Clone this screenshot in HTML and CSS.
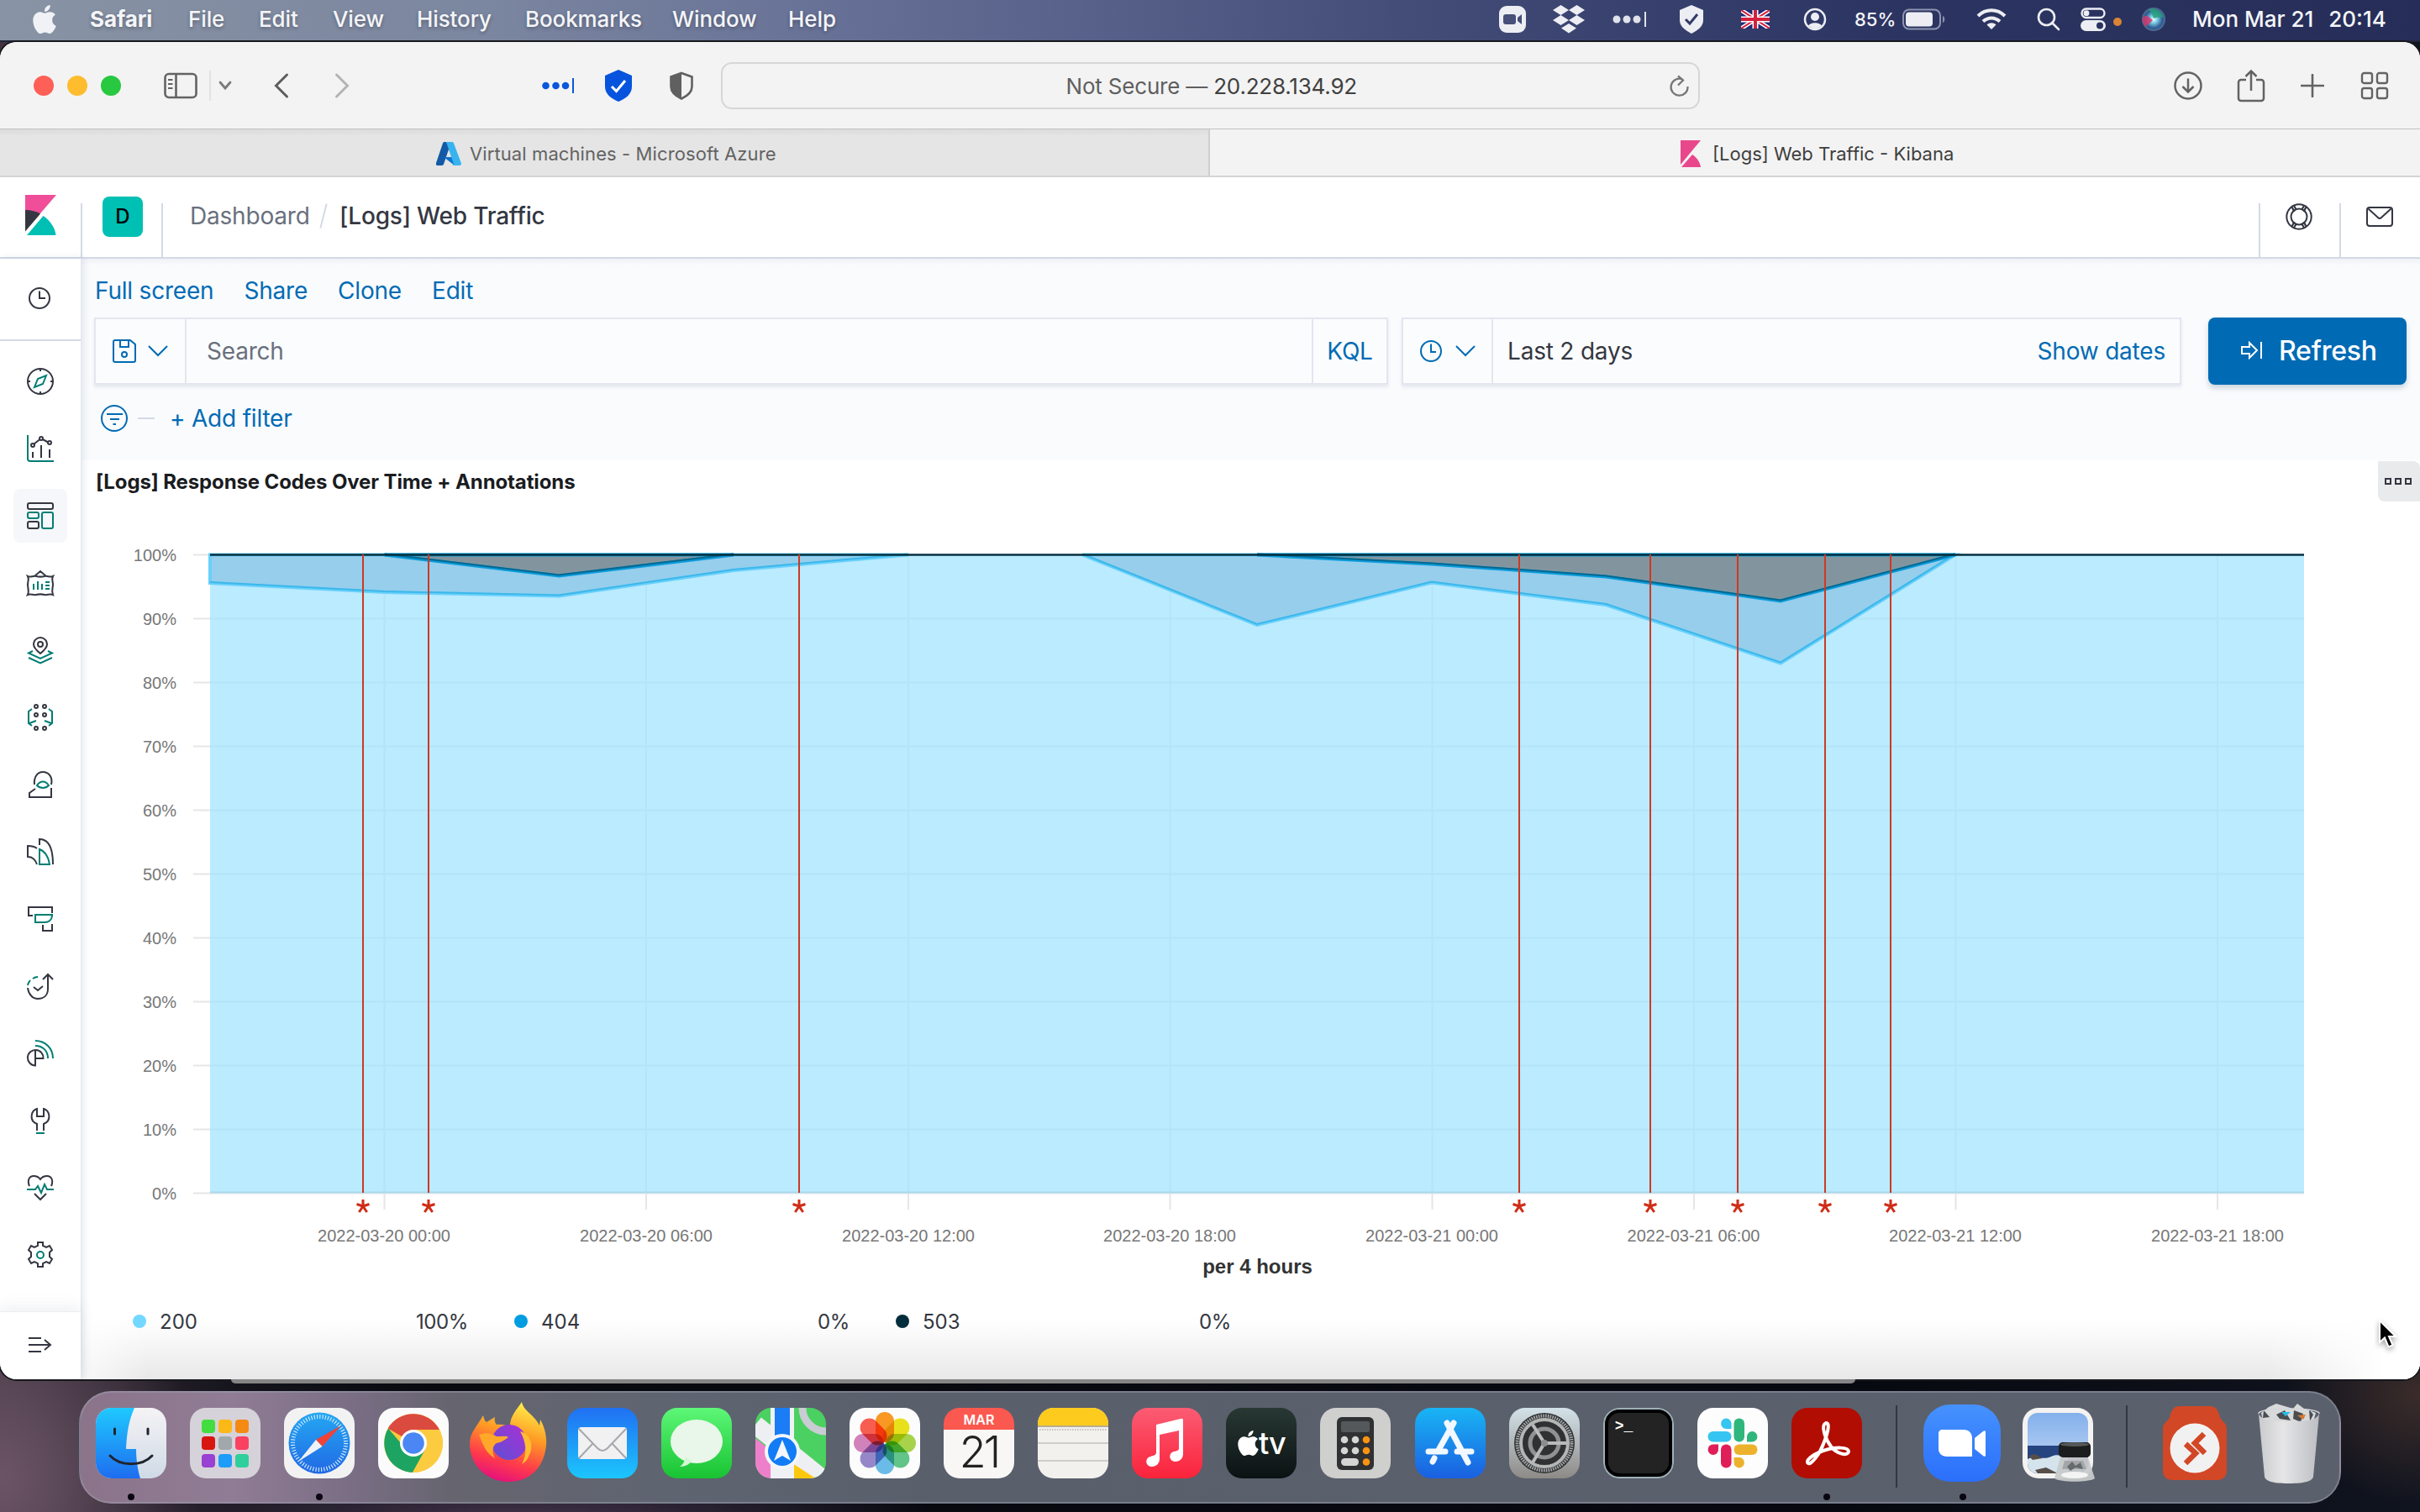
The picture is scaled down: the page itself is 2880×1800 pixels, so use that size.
FILE: index.html
```html
<!DOCTYPE html>
<html lang="en">
<head>
<meta charset="utf-8">
<title>[Logs] Web Traffic - Kibana</title>
<link rel="stylesheet" href="styles.css">
</head>
<body>
<header class="menubar">
  <nav class="menus">
    <svg class="apple" width="28" height="34" viewBox="2 0 20 24" preserveAspectRatio="none"><path fill="#f1f2f5" d="M12.152 6.896c-.948 0-2.415-1.078-3.96-1.04-2.04.027-3.91 1.183-4.961 3.014-2.117 3.675-.546 9.103 1.519 12.09 1.013 1.454 2.208 3.09 3.792 3.039 1.52-.065 2.09-.987 3.935-.987 1.831 0 2.35.987 3.96.948 1.637-.026 2.676-1.48 3.676-2.948 1.156-1.688 1.636-3.325 1.662-3.415-.039-.013-3.182-1.221-3.22-4.857-.026-3.04 2.48-4.494 2.597-4.559-1.429-2.09-3.623-2.324-4.39-2.376-2-.156-3.675 1.09-4.61 1.09zM15.53 3.83c.843-1.012 1.4-2.427 1.245-3.83-1.207.052-2.662.805-3.532 1.818-.78.896-1.454 2.338-1.273 3.714 1.338.104 2.715-.688 3.559-1.701"/></svg>
    <span class="app-name">Safari</span><span>File</span><span>Edit</span><span>View</span><span>History</span><span>Bookmarks</span><span>Window</span><span>Help</span>
  </nav>
  <div class="status">
    <svg width="34" height="34" viewBox="0 0 34 34"><rect x="1" y="1" width="32" height="32" rx="9" fill="#eceef3"/><rect x="6" y="11" width="15" height="12" rx="3" fill="#46507a"/><path d="M23 15l5-4v12l-5-4z" fill="#46507a"/></svg>
    <svg width="38" height="34" viewBox="0 0 38 34"><path fill="#eceef3" d="M9.5 0l9.500 6-9.500 6L0 6zM28.500 0L38 6l-9.500 6L19 6zM9.500 12l9.500 6-9.500 6L0 18zM28.500 12l9.500 6-9.500 6-9.500-6zM19 22l9 5.500-9 6-9-6z"/></svg>
    <svg width="41" height="20" viewBox="0 0 41 20"><g fill="#dfe2ea"><circle cx="5" cy="10" r="4.500"/><circle cx="17" cy="10" r="4.500"/><circle cx="29" cy="10" r="4.500"/><rect x="38" y="1" width="2" height="18"/></g></svg>
    <svg width="30" height="34" viewBox="0 0 30 34"><path fill="#eceef3" d="M15 0l14 6v12c0 8-7 12-14 16C8 30 1 26 1 18V6z"/><path d="M8 17l5 5 9-11" fill="none" stroke="#333c68" stroke-width="3"/></svg>
    <svg width="34" height="22" viewBox="0 0 34 22"><rect width="34" height="22" rx="1" fill="#1d2c78"/><path d="M0 0l34 22M34 0L0 22" stroke="#fff" stroke-width="5"/><path d="M0 0l34 22M34 0L0 22" stroke="#d4213d" stroke-width="2"/><path d="M17 0v22M0 11h34" stroke="#fff" stroke-width="7"/><path d="M17 0v22M0 11h34" stroke="#d4213d" stroke-width="4"/></svg>
    <svg width="28" height="28" viewBox="0 0 28 28"><circle cx="14" cy="14" r="12" fill="none" stroke="#eceef3" stroke-width="2.500"/><circle cx="14" cy="11" r="5" fill="#eceef3"/><path fill="#eceef3" d="M6 22c2-5 14-5 16 0l-8 4z"/></svg>
    <span class="percent">85%</span>
    <svg width="52" height="26" viewBox="0 0 52 26"><rect x="1" y="1.500" width="44" height="23" rx="7" fill="none" stroke="#8d94b0" stroke-width="2"/><rect x="4" y="4.500" width="32" height="17" rx="4" fill="#eceef3"/><path d="M48 9c3 1 3 7 0 8z" fill="#8d94b0"/></svg>
    <svg width="36" height="26" viewBox="0 0 36 26"><g fill="none" stroke="#eceef3" stroke-width="4"><path d="M2 9C11 0 25 0 34 9"/><path d="M8 15.500c6-5.500 14-5.500 20 0"/></g><path fill="#eceef3" d="M18 25l-5.500-5.500c3-3 8-3 11 0z"/></svg>
    <svg width="28" height="28" viewBox="0 0 28 28"><g fill="none" stroke="#eceef3" stroke-width="2.600"><circle cx="11.500" cy="11.500" r="9.500"/><path d="M18 18l8 8" stroke-linecap="round"/></g></svg>
    <svg width="30" height="28" viewBox="0 0 30 28"><rect x="1.500" y="1.500" width="27" height="10.500" rx="5.200" fill="none" stroke="#eceef3" stroke-width="2.400"/><circle cx="7" cy="6.700" r="3.400" fill="#eceef3"/><rect x="0" y="15" width="30" height="13" rx="6.500" fill="#eceef3"/><circle cx="23" cy="21.500" r="4" fill="#2b3360"/></svg>
    <i class="mic-dot"></i>
    <svg width="30" height="30" viewBox="0 0 30 30"><defs><radialGradient id="siri"><stop offset="0" stop-color="#f4ffff"/><stop offset=".3" stop-color="#7fd0e4"/><stop offset=".75" stop-color="#2d5a94"/><stop offset="1" stop-color="#55708f"/></radialGradient></defs><circle cx="15" cy="15" r="14" fill="url(#siri)"/><path d="M2 13c5-5 8 0 12 3-4 5-6 4-8 8-3-3-5-7-4-11z" fill="#d2376f" opacity=".85"/><path d="M9 3c8-3 16 3 18 10-5-1-10 0-12 1-1-4-3-7-6-11z" fill="#26a07a" opacity=".85"/></svg>
    <span class="clock"><span>Mon Mar 21</span><span>20:14</span></span>
  </div>
</header>

<main class="window">
  <div class="toolbar">
    <div class="tools-left">
      <i class="light red"></i><i class="light yellow"></i><i class="light green"></i>
      <svg width="40" height="32" viewBox="0 0 40 32"><g fill="none" stroke="#636363" stroke-width="2.600"><rect x="1.500" y="2" width="37" height="28" rx="4.500"/><path d="M14.500 2v28"/><path d="M5 9h5.500M5 14h5.500M5 19h5.500" stroke-width="2"/></g></svg>
      <i class="tool-rule"></i>
      <svg width="16" height="12" viewBox="0 0 16 12"><path d="M2 2l6 7 6-7" fill="none" stroke="#7b7b7b" stroke-width="2.800" stroke-linecap="round"/></svg>
      <svg width="18" height="32" viewBox="0 0 18 32"><path d="M15.500 3L2.500 16l13 13" fill="none" stroke="#5d5d5d" stroke-width="3" stroke-linecap="round"/></svg>
      <svg width="18" height="32" viewBox="0 0 18 32"><path d="M2.500 3l13 13-13 13" fill="none" stroke="#b4b4b4" stroke-width="3" stroke-linecap="round"/></svg>
      <svg width="40" height="20" viewBox="0 0 40 20"><g fill="#0a57dc"><circle cx="4.500" cy="10" r="4.300"/><circle cx="16.500" cy="10" r="4.300"/><circle cx="28" cy="10" r="4.300"/><rect x="36" y="1" width="2" height="18"/></g></svg>
      <svg width="32" height="38" viewBox="0 0 32 38"><path fill="#0653de" d="M16 0l16 7v13c0 9-7 14-16 18C7 34 0 29 0 20V7z"/><path d="M8 20l5.500 5.500L24 13" fill="none" stroke="#fff" stroke-width="3"/></svg>
      <svg width="30" height="34" viewBox="0 0 30 34"><path d="M15 2l12.500 4.500V18c0 7-5 11-12.500 14.500C7.500 29 2.500 25 2.500 18V6.500z" fill="none" stroke="#606060" stroke-width="2.600"/><path d="M15 2v30.500C7.500 29 2.500 25 2.500 18V6.500z" fill="#606060"/></svg>
    </div>
    <div class="address"><span class="insecure">Not Secure — <b>20.228.134.92</b></span>
      <svg width="26" height="28" viewBox="0 0 26 28"><path d="M22.500 14a10 10 0 1 1-6-8.500M11 1.500l6 5-6 6" fill="none" stroke="#777" stroke-width="2.300"/></svg>
    </div>
    <div class="tools-right">
      <svg width="36" height="36" viewBox="0 0 36 36"><g fill="none" stroke="#636363" stroke-width="2.500"><circle cx="18" cy="18" r="15.500"/><path d="M18 9.500v16M11.500 19l6.500 6.500 6.500-6.500"/></g></svg>
      <svg width="34" height="40" viewBox="0 0 34 40"><g fill="none" stroke="#636363" stroke-width="2.500"><path d="M11 13H5a3 3 0 0 0-3 3v19a3 3 0 0 0 3 3h24a3 3 0 0 0 3-3V16a3 3 0 0 0-3-3h-6M17 26V3M10.500 9L17 2.500 23.500 9"/></g></svg>
      <svg width="28" height="28" viewBox="0 0 28 28"><path d="M14 1v26M1 14h26" stroke="#636363" stroke-width="2.600" stroke-linecap="round"/></svg>
      <svg width="34" height="34" viewBox="0 0 34 34"><g fill="none" stroke="#636363" stroke-width="2.400"><rect x="2" y="2" width="12" height="12" rx="2.500"/><rect x="20" y="2" width="12" height="12" rx="2.500"/><rect x="2" y="20" width="12" height="12" rx="2.500"/><rect x="20" y="20" width="12" height="12" rx="2.500"/></g></svg>
    </div>
  </div>
  <div class="tabs">
    <div class="tab inactive">
      <svg width="30" height="28" viewBox="0 0 30 28"><path d="M9 0h9L9 26.500A2.500 2.500 0 0 1 6.500 28H2a2 2 0 0 1-2-3L8 1.500z" fill="#1459a5"/><path d="M9 18h14l3 8-4 2z" fill="#0f73cf"/><path d="M11 0h8c1 0 1.700.5 2 1.500L29.800 25c.6 2-.5 3-2 3H19c1.500 0 2-1.500 1.700-2.500L12.500 1.500C12.200.7 12 .3 11 0z" fill="#37b4ef"/></svg>
      <span>Virtual machines - Microsoft Azure</span>
    </div>
    <div class="tab active">
      <svg width="24" height="32" viewBox="0 0 24 32"><path d="M0 0h24L0 29z" fill="#e8478b"/><path d="M14 17c6 4 9 9 10 15H1z" fill="#e8478b"/></svg>
      <span>[Logs] Web Traffic - Kibana</span>
    </div>
  </div>

  <div class="kibana-header">
    <div class="logo"><svg width="37" height="48" viewBox="0 0 37 48"><path d="M0 0h37L0 43z" fill="#f04e98"/><path d="M0 18c7 0 13 1.500 18 4.500L0 43.500z" fill="#343741"/><path d="M21.500 25C30 31 35.500 39 36.500 48H2z" fill="#00bfb3"/></svg></div>
    <i class="rule"></i>
    <div class="space"><span>D</span></div>
    <i class="rule"></i>
    <div class="crumbs"><span class="crumb">Dashboard</span><i></i><span class="current">[Logs] Web Traffic</span></div>
    <i class="rule"></i>
    <div class="head-icon"><svg width="32" height="32" viewBox="0 0 32 32"><g fill="none" stroke="#343741" stroke-width="2"><circle cx="16" cy="16" r="14.700"/><circle cx="16" cy="16" r="9.500"/><path d="M10 3l3 5M7.500 4.500l3 5.500M22 3l-3 5M24.500 4.500l-3 5.500M10 29l3-5M7.500 27.500l3-5.500M22 29l-3-5M24.500 27.500l-3-5.500" stroke-width="2.200"/></g></svg></div>
    <i class="rule"></i>
    <div class="head-icon"><svg width="32" height="32" viewBox="0 0 32 32"><g fill="none" stroke="#343741" stroke-width="2"><rect x="1" y="5" width="30" height="22" rx="3"/><path d="M2.500 6.500L14 17a3 3 0 0 0 4 0L29.500 6.500"/></g></svg></div>
  </div>

  <div class="kibana-body">
    <aside class="sidebar">
      <div class="recent"><svg width="28" height="28" viewBox="0 0 28 28"><g fill="none" stroke="#343741" stroke-width="2"><circle cx="14" cy="14" r="12"/><path d="M14 5.500V14h7"/></g></svg></div>
      <nav class="apps">
        <span><svg viewBox="0 0 32 32"><g class="k"><circle cx="16" cy="16" r="15"/><path d="M16 1v3M16 28v3M1 16h3M28 16h3"/></g><path class="t" d="M23 9l-4 10-10 4 4-10z"/></svg></span>
        <span><svg viewBox="0 0 32 32"><path class="t" d="M1 0v28a3 3 0 0 0 3 3h28"/><g class="k"><path d="M7 20v7M17 12v15M27 17v10"/><circle cx="7" cy="12" r="2"/><circle cx="17" cy="4" r="2"/><circle cx="27" cy="9" r="2"/><path d="M8.500 10.500l7-5.500M18.700 5l6.500 3.500"/></g></svg></span>
        <span class="on"><svg viewBox="0 0 32 32"><g class="k"><rect x="1" y="1" width="30" height="7" rx="2"/><rect x="1" y="23" width="13" height="8" rx="2"/></g><g class="t"><rect x="1" y="12" width="13" height="7" rx="2"/><rect x="18" y="12" width="13" height="19" rx="2"/></g></svg></span>
        <span><svg viewBox="0 0 32 32"><path class="k" d="M9 8l7-6 7 6M1 8c4 2 6-1 10 0s6 1 10 0 6 2 10 0c-2 4 0 6 0 10s-2 6 0 12c-4-2-6 1-10 0s-6-1-10 0-6-2-10 0c2-4 0-8 0-12s2-6 0-10z"/><path class="t" d="M8 17v7M13 14v10M18 17v7M22 15h5M22 19h5M22 23h5"/></svg></span>
        <span><svg viewBox="0 0 32 32"><g class="k"><path d="M16 20c-5-4-8-7-8-11a8 8 0 0 1 16 0c0 4-3 7-8 11z"/><circle cx="16" cy="9" r="3"/></g><path class="t" d="M7 17l-5 2.500L16 26l14-6.500-5-2.500M2 25l14 6.500L30 25"/></svg></span>
        <span><svg viewBox="0 0 32 32"><g class="k"><circle cx="11" cy="3" r="2"/><circle cx="21" cy="3" r="2"/><circle cx="11" cy="13" r="2"/><circle cx="21" cy="13" r="2"/><circle cx="11" cy="29" r="2"/><circle cx="21" cy="29" r="2"/></g><path class="t" d="M6 6L2 9v14l4 3M26 6l4 3v14l-4 3M3 23l8-3M29 23l-8-3"/></svg></span>
        <span><svg viewBox="0 0 32 32"><path class="k" d="M9 16c-1-8 3-15 10-15s12 6 10 15M10 21l-7 5v5h26V20"/><path class="t" d="M12 17c4-6 10-6 14 0-4 4-10 4-14 0z"/></svg></span>
        <span><svg viewBox="0 0 32 32"><path class="k" d="M12 12C8 9 5 9 1 9v13c5 0 9 3 11 9M15 8V1c9 0 16 8 16 30"/><path class="t" d="M15 13c6 2 11 9 12 18H15z"/></svg></span>
        <span><svg viewBox="0 0 32 32"><path class="k" d="M7 12H2V2h28v7M19 23v7h11v-8"/><path class="t" d="M10 11h20c0 6-4 9-9 9H10z"/></svg></span>
        <span><svg viewBox="0 0 32 32"><path class="k" d="M1 18c1 8 6 13 12 13 8 0 12-5 12-12V2M19 8l6-6 6 6M8 17l5 4 6-5"/><path class="t" d="M1 15c.5-3 1.500-4 3-6M7 7c2-1.500 4-2 6-2"/></svg></span>
        <span><svg viewBox="0 0 32 32"><path class="k" d="M10 12v18.500A9.300 9.300 0 1 1 19.500 22H10"/><path class="t" d="M10 1c12 0 21 9 21 21M10 7c9 0 15 6 15 15"/></svg></span>
        <span><svg viewBox="0 0 32 32"><path class="k" d="M12 28v-8C2 16 5 4 12 2v9h8V2c7 2 10 14 0 18v8"/><path class="t" d="M11 31h10"/></svg></span>
        <span><svg viewBox="0 0 32 32"><path class="k" d="M3 14C0 7 3 2 8 2c4 0 6 1 8 4 2-3 4-4 8-4 5 0 8 5 5 12M9 23l7 7 7-7"/><path class="t" d="M0 18h10l3-4 4 8 4-10 3 6h8"/></svg></span>
        <span><svg viewBox="0 0 32 32"><path class="k" d="M13 1h6v4l4 2 4-2 3 5-3 3v5l3 3-3 5-4-2-4 2v4h-6v-4l-4-2-4 2-3-5 3-3v-5l-3-3 3-5 4 2 4-2z"/><circle class="t" cx="16" cy="16" r="4"/></svg></span>
      </nav>
      <div class="expand"><svg width="30" height="20" viewBox="0 0 30 20"><path d="M1 2h15M1 10h26M1 18h15M20 4l7 6-7 6" fill="none" stroke="#343741" stroke-width="2"/></svg></div>
    </aside>

    <section class="content">
      <div class="query-area">
        <nav class="actions"><a>Full screen</a><a>Share</a><a>Clone</a><a>Edit</a></nav>
        <div class="query-row">
          <div class="search-box">
            <div class="seg save"><svg width="28" height="28" viewBox="0 0 28 28"><g class="b"><path d="M3 1h18l6 5v19a2 2 0 0 1-2 2H3a2 2 0 0 1-2-2V3a2 2 0 0 1 2-2z"/><path d="M9 1v8h10V1"/><circle cx="14" cy="18" r="3"/></g></svg><svg width="26" height="14" viewBox="0 0 26 14"><path class="b" d="M2 1l11 11L24 1"/></svg></div>
            <span class="placeholder">Search</span>
            <span class="kql">KQL</span>
          </div>
          <div class="time-box">
            <div class="seg when"><svg width="28" height="28" viewBox="0 0 28 28"><g class="b"><circle cx="14" cy="14" r="12"/><path d="M14 5.500V15h6"/></g></svg><svg width="26" height="14" viewBox="0 0 26 14"><path class="b" d="M2 1l11 11L24 1"/></svg></div>
            <span class="range">Last 2 days</span>
            <span class="show-dates">Show dates</span>
          </div>
          <div class="refresh"><svg width="26" height="22" viewBox="0 0 26 22"><path d="M1 7h9V2l9 9-9 9v-5H1zM24 1v20" fill="none" stroke="#fff" stroke-width="2"/></svg><span>Refresh</span></div>
        </div>
        <div class="filters"><svg width="32" height="32" viewBox="0 0 32 32"><g class="b"><circle cx="16" cy="16" r="15"/><path d="M7 11h19M11 17h11M14.500 23h3.500"/></g></svg><i></i><span>+ Add filter</span></div>
      </div>

      <div class="panel">
        <div class="panel-head"><h2>[Logs] Response Codes Over Time + Annotations</h2><div class="options"><i></i><i></i><i></i></div></div>
        <svg class="chart" width="2784" height="940" viewBox="96 598 2784 940">
          <g stroke="#e6e6e6" stroke-width="2">
            <path d="M230 660.500h20M230 736.500h20M230 812.500h20M230 888.500h20M230 964.500h20M230 1040.500h20M230 1116.500h20M230 1192.500h20M230 1268.500h20M230 1344.500h20M230 1420.500h2512"/>
            <path d="M457.500 1420v20M769 1420v20M1081 1420v20M1392.500 1420v20M1704.500 1420v20M2016 1420v20M2327.500 1420v20M2639 1420v20"/>
          </g>
          <path fill="#baebff" d="M250 660H2742V1420H250z"/>
          <path fill="none" stroke="#b3e4f8" stroke-width="2" d="M250 736.500h2492M250 812.500h2492M250 888.500h2492M250 964.500h2492M250 1040.500h2492M250 1116.500h2492M250 1192.500h2492M250 1268.500h2492M250 1344.500h2492M457.500 660v760M769 660v760M1081 660v760M1392.500 660v760M1704.500 660v760M2016 660v760M2327.500 660v760M2639 660v760"/>
          <path stroke="#a9d9ee" stroke-width="2" d="M250 1419.500h2492"/>
          <g fill="none" stroke-width="4">
            <path fill="#96ceec" stroke="#68d0fb" d="M250 694L457.700 705 665.300 709.500 873 679 1080.700 660.500H250zM1288.300 660.500L1496 744 1703.700 693.500 1911.300 720 2119 789.500 2326.700 660.500z"/>
            <path stroke="#3db7ea" stroke-width="2" d="M250 693L457.700 704 665.300 708.500 873 678 1080.700 659.500M1288.300 659.500L1496 743 1703.700 692.500 1911.300 719 2119 788.500 2326.700 659.500"/>
            <path fill="#82959f" stroke="#0a9bdb" d="M457.700 660.500L665.300 685.500 873 660.500zM1496 660.500L1703.700 671.500 1911.300 686.500 2119 715.500 2326.700 660.500z"/>
            <path stroke="#05688f" stroke-width="2" d="M457.700 659.500L665.300 684.500 873 659.500M1496 659.500L1703.700 670.500 1911.300 685.500 2119 714.500 2326.700 659.500"/>
            <path stroke="#06303f" stroke-width="2.400" d="M250 660.500H2742"/>
          </g>
          <path fill="none" stroke="#cc3a24" stroke-width="2" d="M432 660v760M510 660v760M951 660v760M1808 660v760M1964 660v760M2068 660v760M2172 660v760M2250 660v760"/>
          <defs><path id="star" d="M0 0v-8M0 0l-7.500-2.500M0 0l7.500-2.500M0 0l-4.700 7M0 0l4.700 7" stroke="#cf2c16" stroke-width="3"/></defs>
          <use href="#star" x="432" y="1436"/><use href="#star" x="510" y="1436"/><use href="#star" x="951" y="1436"/><use href="#star" x="1808" y="1436"/><use href="#star" x="1964" y="1436"/><use href="#star" x="2068" y="1436"/><use href="#star" x="2172" y="1436"/><use href="#star" x="2250" y="1436"/>
          <g class="y-labels"><text x="210" y="668">100%</text><text x="210" y="744">90%</text><text x="210" y="820">80%</text><text x="210" y="896">70%</text><text x="210" y="972">60%</text><text x="210" y="1048">50%</text><text x="210" y="1124">40%</text><text x="210" y="1200">30%</text><text x="210" y="1276">20%</text><text x="210" y="1352">10%</text><text x="210" y="1428">0%</text></g>
          <g class="x-labels"><text x="457" y="1478">2022-03-20 00:00</text><text x="769" y="1478">2022-03-20 06:00</text><text x="1081" y="1478">2022-03-20 12:00</text><text x="1392" y="1478">2022-03-20 18:00</text><text x="1704" y="1478">2022-03-21 00:00</text><text x="2015.500" y="1478">2022-03-21 06:00</text><text x="2327" y="1478">2022-03-21 12:00</text><text x="2639" y="1478">2022-03-21 18:00</text></g>
          <text class="axis-title" x="1496.500" y="1516">per 4 hours</text>
        </svg>
        <div class="legend">
          <div class="entry"><i class="c200"></i><span>200</span><b>100%</b></div>
          <div class="entry"><i class="c404"></i><span>404</span><b>0%</b></div>
          <div class="entry"><i class="c503"></i><span>503</span><b>0%</b></div>
        </div>
      </div>
    </section>
  </div>
</main>
<svg class="cursor" width="24" height="38" viewBox="0 0 24 38"><path d="M2 2v26l6-5.500 4.500 11 5-2.200L13 21h8z" fill="#000" stroke="#fff" stroke-width="2"/></svg>

<div class="desk">
<div class="behind"></div>
<footer class="dock">
  <svg class="app" viewBox="0 0 84 84"><defs><linearGradient id="g1" x1="0" y1="0" x2="0" y2="1"><stop offset="0" stop-color="#1fc9ff"/><stop offset="1" stop-color="#1e6df0"/></linearGradient><linearGradient id="g2" x1="0" y1="0" x2="0" y2="1"><stop offset="0" stop-color="#f5f3f5"/><stop offset="1" stop-color="#cfdae6"/></linearGradient></defs><rect width="84" height="84" rx="19" fill="url(#g2)"/><path fill="url(#g1)" d="M19 0h27c-7 16-9 30-10 49h12c0 13 2 25 5 35H19A19 19 0 0 1 0 65V19A19 19 0 0 1 19 0z"/><path d="M22.500 25v6M62 25v6M17 57c12 13 38 13 50 0" fill="none" stroke="#20242c" stroke-width="3" stroke-linecap="round"/></svg>
  <svg class="app" viewBox="0 0 84 84"><rect width="84" height="84" rx="19" fill="#d6d2da"/><rect x="14" y="14" width="16" height="16" rx="4" fill="#44dd40"/><rect x="34" y="14" width="16" height="16" rx="4" fill="#fcb816"/><rect x="54" y="14" width="16" height="16" rx="4" fill="#f58a12"/><rect x="14" y="34" width="16" height="16" rx="4" fill="#d9150f"/><rect x="34" y="34" width="16" height="16" rx="4" fill="#a0a8ab"/><rect x="54" y="34" width="16" height="16" rx="4" fill="#fb4160"/><rect x="14" y="55" width="16" height="16" rx="4" fill="#9941d2"/><rect x="34" y="55" width="16" height="16" rx="4" fill="#1d9cfa"/><rect x="54" y="55" width="16" height="16" rx="4" fill="#2fcf9b"/></svg>
  <svg class="app" viewBox="0 0 84 84"><defs><linearGradient id="g3" x1="0" y1="0" x2="0" y2="1"><stop offset="0" stop-color="#24a7f2"/><stop offset="1" stop-color="#2169e4"/></linearGradient></defs><rect width="84" height="84" rx="19" fill="#f2f2f3"/><circle cx="42" cy="42" r="36.500" fill="url(#g3)"/><circle cx="42" cy="42" r="31.500" fill="none" stroke="#d9efff" stroke-width="5" stroke-dasharray="1.100 2.200"/><path d="M68 21L45.500 46 38 38z" fill="#f04237"/><path d="M17 64l21-26 7.500 8z" fill="#f0f2f6"/></svg>
  <svg class="app" viewBox="0 0 84 84"><rect width="84" height="84" rx="19" fill="#fbfbfb"/><circle cx="42" cy="42" r="35" fill="#fbc93c"/><path d="M42 42L11.700 24.500A35 35 0 0 1 73 26H42z" fill="#db4a3e"/><path d="M12 24.500A35 35 0 0 0 41 77L56 50 42 42H27z" fill="#1da462"/><path d="M42 26h31A35 35 0 0 1 41 77l15-27z" fill="#fdcb40"/><circle cx="42" cy="42" r="16" fill="#fff"/><circle cx="42" cy="42" r="12.800" fill="#4a87f4"/></svg>
  <svg class="app" viewBox="0 0 84 84"><defs><linearGradient id="g4" x1="0.700" y1="0" x2=".4" y2="1"><stop offset="0" stop-color="#fff04a"/><stop offset=".4" stop-color="#ff9a24"/><stop offset=".75" stop-color="#ff3a4b"/><stop offset="1" stop-color="#e4127c"/></linearGradient><linearGradient id="g5" x1="0" y1="1" x2="1" y2="0"><stop offset="0" stop-color="#5a50d2"/><stop offset="1" stop-color="#ad2fd6"/></linearGradient></defs><path fill="url(#g4)" d="M59-7c2 11 15 15 21 28l1-7c6 10 8 23 7 31C85 73 67 88 43 88 18 88-3 69-3 43-3 29 6 22 13 9c1 4 2 7 4 8l10-6c-1 4 0 7 2 9 7-1 12 1 16 3C44 10 54 1 59-7z"/><circle cx="44" cy="41" r="21" fill="url(#g5)"/><path fill="#ffa82a" d="M8 32c8-3 15-2 21 2 7 0 12-1 14 1-4 3-8 6-14 7-5 3-6 10-2 18C16 54 12 42 8 32z"/><path fill="#ffbd31" d="M57 28c13 3 17 18 10 30-2 5-5 7-8 9 7-12 5-27-2-39z"/></svg>
  <svg class="app" viewBox="0 0 84 84"><defs><linearGradient id="g6" x1="0" y1="0" x2="0" y2="1"><stop offset="0" stop-color="#2070f2"/><stop offset="1" stop-color="#1cc6fd"/></linearGradient></defs><rect width="84" height="84" rx="19" fill="url(#g6)"/><rect x="13" y="23" width="58" height="38" rx="4" fill="#f1f1f1"/><path d="M14 25l22 23c4 4 8 4 12 0l22-23M14 60l16-17M70 60L54 43" fill="none" stroke="#a5a8ad" stroke-width="2"/></svg>
  <svg class="app" viewBox="0 0 84 84"><defs><linearGradient id="g7" x1="0" y1="0" x2="0" y2="1"><stop offset="0" stop-color="#5df777"/><stop offset="1" stop-color="#18c332"/></linearGradient></defs><rect width="84" height="84" rx="19" fill="url(#g7)"/><ellipse cx="42" cy="40" rx="31" ry="26" fill="#e9f6ea"/><path d="M28 58c0 6-2 9-6 12 7 0 12-3 14-7z" fill="#d5f6d6"/></svg>
  <svg class="app" viewBox="0 0 84 84"><defs><clipPath id="m"><rect width="84" height="84" rx="19"/></clipPath></defs><g clip-path="url(#m)"><path fill="#4bd161" d="M0 0h84v84H0z"/><path d="M0 20l84 68" stroke="#eeeff3" stroke-width="22"/><path d="M0 36l22 18v30H0z" fill="#ee80cb"/><path d="M44 66l34 22H44z" fill="#fcc80d"/><circle cx="84" cy="0" r="28" fill="none" stroke="#c9ccd3" stroke-width="9"/><path fill="#f0f1f5" d="M18 0h28v84H18z"/><path fill="#1a7df5" d="M23 0h18v40H23z"/><circle cx="32" cy="52" r="21" fill="#f3f5f8"/><circle cx="32" cy="52" r="17" fill="#117cf6"/><path d="M32 38l10 25-10-6-10 6z" fill="#f3f6fa"/></g></svg>
  <svg class="app photos" viewBox="0 0 84 84"><rect width="84" height="84" rx="19" fill="#fcfcfc"/><rect class="petal" x="31" y="5" width="22" height="36" rx="11" fill="#fc9a23"/><rect class="petal" x="31" y="5" width="22" height="36" rx="11" fill="#ece31c" transform="rotate(45 42 42)"/><rect class="petal" x="31" y="5" width="22" height="36" rx="11" fill="#a9d64c" transform="rotate(90 42 42)"/><rect class="petal" x="31" y="5" width="22" height="36" rx="11" fill="#62c78a" transform="rotate(135 42 42)"/><rect class="petal" x="31" y="5" width="22" height="36" rx="11" fill="#6bbdea" transform="rotate(180 42 42)"/><rect class="petal" x="31" y="5" width="22" height="36" rx="11" fill="#988acb" transform="rotate(225 42 42)"/><rect class="petal" x="31" y="5" width="22" height="36" rx="11" fill="#d484bc" transform="rotate(270 42 42)"/><rect class="petal" x="31" y="5" width="22" height="36" rx="11" fill="#fb5f50" transform="rotate(315 42 42)"/></svg>
  <div class="app calendar"><span>MAR</span><b>21</b></div>
  <svg class="app" viewBox="0 0 84 84"><defs><clipPath id="n"><rect width="84" height="84" rx="19"/></clipPath></defs><g clip-path="url(#n)"><path fill="#f3f1ed" d="M0 0h84v84H0z"/><path fill="#fccb1d" d="M0 0h84v21H0z"/><path d="M0 22h84" stroke="#b8ad93" stroke-width="2"/><path d="M2 26h80" stroke="#b5b3b0" stroke-width="1.500" stroke-dasharray="1.500 1.500"/><path d="M0 42h84M0 63h84" stroke="#cfcdca" stroke-width="2"/></g></svg>
  <svg class="app" viewBox="0 0 84 84"><defs><linearGradient id="g8" x1="0" y1="0" x2="0" y2="1"><stop offset="0" stop-color="#fb5c74"/><stop offset="1" stop-color="#fa233b"/></linearGradient></defs><rect width="84" height="84" rx="19" fill="url(#g8)"/><path fill="#fff" d="M29 20l29-7c2-.5 3 0 3 2v40c0 5-4 9-9 9-8 0-9-10-2-12 4-1 6-1 6-4V27l-23 5v29c0 5-4 9-9 9-8 0-9-10-2-12 4-1 7-2 7-5z"/></svg>
  <div class="app tv"><svg width="25" height="30" viewBox="2 0 20 24"><path fill="#fff" d="M12.152 6.896c-.948 0-2.415-1.078-3.960-1.040-2.040.027-3.910 1.183-4.961 3.014-2.117 3.675-.546 9.103 1.519 12.090 1.013 1.454 2.208 3.090 3.792 3.039 1.520-.065 2.090-.987 3.935-.987 1.831 0 2.350.987 3.960.948 1.637-.026 2.676-1.480 3.676-2.948 1.156-1.688 1.636-3.325 1.662-3.415-.039-.013-3.182-1.221-3.220-4.857-.026-3.040 2.480-4.494 2.597-4.559-1.429-2.090-3.623-2.324-4.390-2.376-2-.156-3.675 1.090-4.610 1.090zM15.530 3.830c.843-1.012 1.400-2.427 1.245-3.830-1.207.052-2.662.805-3.532 1.818-.780.896-1.454 2.338-1.273 3.714 1.338.104 2.715-.688 3.559-1.701"/></svg><span>tv</span></div>
  <svg class="app" viewBox="0 0 84 84"><rect width="84" height="84" rx="19" fill="#cfcfcd"/><rect x="20" y="11" width="44" height="63" rx="6" fill="#2f3133"/><rect x="25" y="16" width="34" height="13" rx="2" fill="#55585a"/><g fill="#d5d5d3"><circle cx="29" cy="38" r="4.300"/><circle cx="42" cy="38" r="4.300"/><circle cx="29" cy="51" r="4.300"/><circle cx="42" cy="51" r="4.300"/><rect x="25" y="60" width="21" height="9" rx="4.500"/></g><g fill="#fb9312"><circle cx="55" cy="38" r="4.300"/><circle cx="55" cy="51" r="4.300"/><circle cx="55" cy="64.500" r="4.300"/></g></svg>
  <svg class="app" viewBox="0 0 84 84"><defs><linearGradient id="g9" x1="0" y1="0" x2="0" y2="1"><stop offset="0" stop-color="#19b5f5"/><stop offset="1" stop-color="#1a5fe0"/></linearGradient></defs><rect width="84" height="84" rx="19" fill="url(#g9)"/><path d="M46 18L27 52M38 18l25 47M16 52h20M50 52h17M23 60l-2 4" stroke="#f2f8ff" stroke-width="7" stroke-linecap="round"/></svg>
  <svg class="app" viewBox="0 0 84 84"><defs><linearGradient id="g10" x1="0" y1="0" x2="0" y2="1"><stop offset="0" stop-color="#d3e2e9"/><stop offset="1" stop-color="#8d8a87"/></linearGradient></defs><rect width="84" height="84" rx="19" fill="url(#g10)"/><circle cx="42" cy="42" r="36" fill="#2f3132"/><circle cx="42" cy="42" r="32.500" fill="none" stroke="#a7abad" stroke-width="4" stroke-dasharray="1.600 1.200"/><circle cx="42" cy="42" r="28" fill="none" stroke="#b4b6b6" stroke-width="4"/><circle cx="42" cy="42" r="17" fill="none" stroke="#8f9293" stroke-width="5"/><path d="M42 42h26M42 42L28 20M42 42L28 65" stroke="#b9bbbb" stroke-width="4"/><circle cx="42" cy="42" r="4" fill="#8b8d8d"/></svg>
  <div class="app terminal"><span>&gt;_</span></div>
  <svg class="app" viewBox="0 0 84 84"><rect width="84" height="84" rx="19" fill="#fdfdfd"/><rect x="12.500" y="28" width="28" height="12.500" rx="6.200" fill="#36c5f0"/><path d="M40.500 25H34a6.200 6.200 0 1 1 6.500-6.200z" fill="#36c5f0"/><rect x="43.500" y="12.500" width="12.500" height="28" rx="6.200" fill="#2eb67d"/><path d="M59 40.500V34a6.200 6.200 0 1 1 6.200 6.500z" fill="#2eb67d"/><rect x="43.500" y="43.500" width="28" height="12.500" rx="6.200" fill="#ecb22e"/><path d="M43.500 59H50a6.200 6.200 0 1 1-6.500 6.200z" fill="#ecb22e"/><rect x="28" y="43.500" width="12.500" height="28" rx="6.200" fill="#e01e5a"/><path d="M25 43.500V50a6.200 6.200 0 1 1-6.200-6.500z" fill="#e01e5a"/></svg>
  <svg class="app" viewBox="0 0 84 84"><rect width="84" height="84" rx="19" fill="#b20d02"/><path d="M41 18c-7 3 0 20 6 28 7 9 20 12 21 6 0-6-17-5-27-2-13 4-23 11-22 15 3 6 15-11 19-22 4-10 9-25 3-25z" fill="none" stroke="#fff" stroke-width="4"/></svg>
  <i class="dock-rule first"></i>
  <svg class="app big" viewBox="0 0 92 92"><defs><linearGradient id="g11" x1="0" y1="0" x2="0" y2="1"><stop offset="0" stop-color="#4592fe"/><stop offset="1" stop-color="#2b6ffb"/></linearGradient></defs><rect width="92" height="92" rx="32" fill="url(#g11)"/><path fill="#fff" d="M22 30h26c6 0 10 4 10 10v22H28c-6 0-10-4-10-9V34c0-2 2-4 4-4zM61 40l10-8c2-1.500 3-1 3 1v27c0 2-1 2.500-3 1l-10-8z"/></svg>
  <svg class="app preview" viewBox="0 0 88 88"><defs><linearGradient id="g12" x1="0" y1="0" x2="0" y2="1"><stop offset="0" stop-color="#83b0ec"/><stop offset="1" stop-color="#c5d9f4"/></linearGradient></defs><rect width="84" height="84" rx="19" fill="#f4f3f2"/><rect x="6" y="6" width="72" height="72" rx="12" fill="url(#g12)"/><path d="M6 45h72v21a12 12 0 0 1-12 12H18A12 12 0 0 1 6 66z" fill="#254480"/><path d="M6 61c10-6 19 2 28-3s14 2 20 0v20H18A12 12 0 0 1 6 66z" fill="#d5e4ec"/><path d="M7 57l8-2 9 5-12 2zM15 74l13-3 14 7H18z" fill="#574d49"/><path d="M45 59h33l8 25c-7 5-41 5-48 0z" fill="#c8cacb" opacity=".95"/><path d="M50 63h22l4 10H47z" fill="#a3a6a9"/><path d="M53 70l6-6 4 5 6-4 3 8-9-2-6 4z" fill="#66696d"/><ellipse cx="62" cy="80" rx="16" ry="4" fill="#f4f4f4"/><rect x="43" y="41" width="38" height="18" rx="5" fill="#1c1d1e"/><ellipse cx="62" cy="43.500" rx="17" ry="2.500" fill="#55585a"/></svg>
  <i class="dock-rule second"></i>
  <svg class="app rdp" viewBox="0 0 76 88"><path d="M20 0h36c8 0 10 6 12 13 2 6 8 6 8 14v50c0 7-5 11-11 11H11C5 88 0 84 0 77V27c0-8 6-8 8-14C10 6 12 0 20 0z" fill="#d24726"/><circle cx="38" cy="50" r="29.500" fill="#f2f1f1"/><path d="M49 33L38 44l12 12M27 45l12 11-12 12" fill="none" stroke="#d24726" stroke-width="6.500"/></svg>
  <svg class="app trash" viewBox="0 0 76 98"><defs><linearGradient id="g13"><stop offset="0" stop-color="#c9cacc"/><stop offset=".4" stop-color="#e6e6e7"/><stop offset="1" stop-color="#bcbec2"/></linearGradient></defs><path d="M5 13l9-7 9-4 10 3 10 3 5-6 8 6 14 5-4 14H8z" fill="#d8d9da"/><path d="M8 10l7 8-8 1zM23 15l10-5 7 12-13-2zM44 10l11 4-3 10-9-4zM62 9l5 6-4 8z" fill="#4a4c50"/><path d="M29 12h11l-6 5z" fill="#25bde7"/><path d="M48 16l10-1-3 6z" fill="#d57734"/><path d="M2 14c4 8 12 9 36 9s32-1 36-9l-7 75c-1 5-9 8-29 8s-28-3-29-8z" fill="url(#g13)"/><path d="M2 14c-2-8 74-8 72 0" fill="none" stroke="#d4d6d9" stroke-width="1.500"/></svg>
</footer>
<div class="lamps"><i></i><i></i><i></i><i></i></div>
</div>
</body>
</html>
```
FILE: styles.css
```css
* { box-sizing: border-box; }
body {
  margin: 0; width: 2880px; height: 1800px; overflow: hidden; position: relative;
  display: flex; flex-direction: column;
  font-family: Inter, "Liberation Sans", sans-serif;
  background:
    radial-gradient(ellipse 240px 260px at 0 1760px, #6b5466, transparent),
    radial-gradient(ellipse 500px 90px at 620px 1815px, #46364e, transparent),
    radial-gradient(ellipse 160px 130px at 2880px 1660px, #3b2c2a, transparent),
    linear-gradient(90deg, #413440 0, #15141c 280px, #080a10 500px, #070910 2200px, #10141f 100%);
}
svg { display: block; flex: none; }
i { display: block; flex: none; }
span { white-space: nowrap; }

/* macOS menu bar */
.menubar {
  height: 50px; flex: none; padding-bottom: 3px; display: flex; justify-content: space-between; align-items: center;
  background: linear-gradient(90deg, #8893a4 0, #7b86a0 20%, #667096 35%, #434d78 58%, #2c3562 78%, #262d58 100%);
  border-bottom: 2px solid #23263a; color: #f4f5f8; font-size: 26px; font-weight: 500;
}
.menus { display: grid; grid-template-columns: 68px 117px 84px 88px 100px 129px 175px 138px 60px; padding-left: 39px; align-items: center; text-shadow: 0 2px 4px rgba(0,0,0,.3); letter-spacing: -.1px; }
.app-name { font-weight: 700; }
.status { display: grid; grid-template-columns: 65px 71px 79px 74px 74px 61px 57px 88px 72px 52px 39px 33px 61px 271px; align-items: center; }
.percent { font-size: 22px; }
.mic-dot { width: 10px; height: 10px; border-radius: 5px; background: #d98534; margin-top: 6px; }
.clock { display: flex; gap: 18px; }

/* browser window */
.window { height: 1592px; flex: none; display: flex; flex-direction: column; border-radius: 20px; overflow: hidden; background: #fff; box-shadow: 0 0 0 2px #17181d; }
.toolbar { height: 104px; flex: none; background: #f3f3f3; display: flex; align-items: center; border-bottom: 1px solid #c2c2c2; }
.tools-left { width: 858px; display: grid; grid-template-columns: 40px 40px 75px 54px 11px 66px 72px 247px 75px 76px 30px; padding-left: 40px; align-items: center; }
.light { width: 24px; height: 24px; border-radius: 12px; }
.red { background: #fe5f57; } .yellow { background: #febc2e; } .green { background: #28c840; }
.tool-rule { width: 2px; height: 36px; background: #e2e2e2; }
.address { width: 1165px; height: 56px; border: 2px solid #d6d6d6; border-radius: 13px; display: flex; align-items: center; justify-content: flex-end; gap: 371px; padding: 2px 9px 0 0; font-size: 26px; letter-spacing: -.2px; color: #5f5f5f; }
.address b { font-weight: 400; color: #404040; }
.tools-right { margin-left: 563px; display: grid; grid-template-columns: 76px 76px 71px 34px; align-items: center; }
.tabs { height: 57px; flex: none; display: flex; border-bottom: 2px solid #d4d4d4; font-size: 22px; }
.tab { width: 1440px; display: flex; align-items: center; padding-top: 2px; background: #f3f3f3; color: #3e3e3e; }
.inactive { background: linear-gradient(#dcdcdc 0, #e5e5e5 8px); border-right: 2px solid #cfcfcf; color: #636363; padding-left: 519px; gap: 10px; letter-spacing: .1px; }
.active { padding-left: 560px; gap: 14px; }

/* Kibana chrome */
.kibana-header { height: 97px; flex: none; display: flex; align-items: center; padding-bottom: 2px; border-bottom: 2px solid #d3dae6; background: #fff; }
.logo { width: 96px; padding: 0 0 4px 30px; }
.kibana-header .rule { width: 2px; height: 64px; background: #d3dae6; align-self: flex-end; margin-bottom: -2px; }
.space { width: 94px; padding-left: 24px; }
.space span { display: flex; width: 48px; height: 48px; border-radius: 8px; background: #00bfb3; align-items: center; justify-content: center; font-size: 24px; font-weight: 500; color: #000; }
.crumbs { flex: 1; display: flex; align-items: center; padding: 0 0 1px 32px; font-size: 28px; letter-spacing: -.2px; }
.crumb { color: #69707d; width: 158px; }
.crumbs i { width: 2px; height: 30px; background: #d3dae6; transform: rotate(14deg); margin-right: 18px; }
.current { color: #343741; font-weight: 500; }
.head-icon { width: 94px; padding-right: 2px; display: flex; justify-content: center; }
.kibana-body { flex: 1; display: flex; min-height: 0; }
.sidebar { width: 97px; flex: none; display: flex; flex-direction: column; border-right: 1px solid #e3e7ee; box-shadow: 2px 0 8px rgba(60,80,110,.14); background: #fff; z-index: 1; }
.recent { height: 98px; padding: 0 0 3px 33px; display: flex; align-items: center; border-bottom: 2px solid #d3dae6; }
.apps { flex: 1; min-height: 0; display: flex; flex-direction: column; gap: 16px; padding: 16px 0 0 16px; }
.apps span { width: 64px; height: 64px; flex: none; border-radius: 8px; padding: 16px; }
.apps .on { background: #f5f7fa; }
.apps svg { width: 32px; height: 32px; overflow: visible; }
.k { fill: none; stroke: #343741; stroke-width: 2; }
.t { fill: none; stroke: #017d73; stroke-width: 2; }
.b { fill: none; stroke: #006bb4; stroke-width: 2; }
.expand { height: 81px; flex: none; padding: 0 0 3px 33px; display: flex; align-items: center; border-top: 1px solid #eceef2; box-shadow: 0 -6px 16px rgba(60,80,110,.08); }

/* query bar */
.content { flex: 1; display: flex; flex-direction: column; }
.query-area { height: 240px; flex: none; background: linear-gradient(#eff1f6 0, #fafbfd 8px); font-size: 28px; letter-spacing: -.2px; color: #006bb4; padding: 0 16px 0 15px; }
.actions { height: 70px; padding: 6px 0 0 1px; display: flex; gap: 36px; align-items: center; }
.query-row { display: flex; height: 80px; }
.search-box, .time-box { display: flex; align-items: center; background: #fbfcfd; border: 2px solid #e3e6ef; box-shadow: 0 3px 4px rgba(152,162,179,.2); }
.search-box { width: 1540px; margin-right: 16px; }
.time-box { width: 928px; margin-right: 32px; }
.seg { height: 76px; display: flex; align-items: center; border-right: 2px solid #e3e6ef; flex: none; }
.save { width: 108px; padding-left: 20px; gap: 13px; }
.when { width: 107px; padding-left: 19px; gap: 14px; }
.placeholder { flex: 1; padding-left: 24px; color: #69707d; }
.kql { height: 76px; width: 89px; display: flex; align-items: center; justify-content: center; border-left: 2px solid #e3e6ef; }
.range { flex: 1; padding-left: 17px; color: #343741; }
.show-dates { padding-right: 17px; }
.refresh { flex: 1; border-radius: 8px; background: #006bb4; color: #fff; display: flex; align-items: center; padding: 0 0 2px 39px; gap: 19px; font-size: 32px; font-weight: 500; box-shadow: 0 4px 6px rgba(54,97,126,.25); }
.filters { height: 90px; padding: 0 0 10px 8px; display: flex; align-items: center; }
.filters i { width: 20px; height: 2px; background: #d3dae6; margin: 0 18px 0 12px; }

/* visualization panel */
.panel {
  flex: 1; min-height: 0; display: flex; flex-direction: column;
  background:
    linear-gradient(90deg, rgba(255,255,255,.7) 0, transparent 80px, transparent 2600px, #fff 2740px),
    linear-gradient(#fff 1020px, #fafafa 1040px, #e8e8e8 1094px);
}
.panel-head { height: 50px; flex: none; display: flex; justify-content: space-between; align-items: center; padding-left: 17px; }
h2 { margin: 0; font-size: 24px; font-weight: 700; letter-spacing: -.12px; color: #1a1c21; }
.options { width: 50px; height: 48px; background: #e9eaec; border-radius: 0 8px 0 8px; display: flex; align-items: center; justify-content: center; gap: 4px; padding-right: 2px; }
.options i { width: 8px; height: 8px; border: 2px solid #343741; }
.chart { margin-left: -1px; }
.y-labels, .x-labels, .axis-title { font-family: "Liberation Sans", Arial, sans-serif; font-size: 20px; fill: #777; }
.y-labels { text-anchor: end; }
.x-labels { text-anchor: middle; }
.axis-title { font-size: 24px; font-weight: 700; fill: #333; text-anchor: middle; }
.legend { height: 70px; flex: none; display: flex; align-items: center; padding-left: 61px; gap: 57px; font-size: 24px; color: #343741; }
.entry { width: 397px; display: flex; align-items: center; }
.entry i { width: 16px; height: 16px; border-radius: 8px; margin-right: 16px; }
.entry b { margin: 0 -2px 0 auto; font-weight: 400; letter-spacing: -.4px; }
.c200 { background: #73d8ff; } .c404 { background: #009ce0; } .c503 { background: #022d3c; }
.cursor { position: absolute; left: 2830px; top: 1570px; filter: drop-shadow(0 3px 3px rgba(0,0,0,.35)); }

/* dock */
.desk { flex: 1; display: flex; flex-direction: column; align-items: center; }
.behind { width: 1933px; height: 5px; background: #858585; border-radius: 0 0 20px 20px; margin-right: 398px; }
.dock {
  width: 2692px; height: 134px; flex: none; margin-top: 9px; border-radius: 38px; border: 2px solid rgba(160,165,180,.45); padding: 0 0 10px 18px;
  display: flex; align-items: center; gap: 28.12px;
  background: linear-gradient(90deg, #8b748a 0, #907c95 180px, #776c82 340px, #66656f 440px, #5e6470 700px, #5a5f6c 1000px, #5b606d 100%);
}
.app { width: 84px; height: 84px; flex: none; border-radius: 19px; overflow: visible; }
.photos { isolation: isolate; }
.petal { mix-blend-mode: multiply; }
.calendar { background: linear-gradient(#fb584f 26px, #f8f7f5 26px); display: flex; flex-direction: column; align-items: center; overflow: hidden; }
.calendar span { font-size: 16px; line-height: 28px; font-weight: 600; color: #fff; }
.calendar b { font-size: 52px; line-height: 50px; font-weight: 300; letter-spacing: -3px; color: #222; }
.tv { background: linear-gradient(#283833, #0b1213); display: flex; align-items: center; justify-content: center; color: #fff; font-size: 36px; font-weight: 500; letter-spacing: -1px; }
.terminal { background: #232323; border: 6px solid #000; outline: 2px solid #9fb0b8; outline-offset: -2px; padding: 6px 8px; color: #fff; font: 700 18px/20px "Liberation Mono", monospace; }
.dock-rule { width: 2px; height: 98px; margin-top: 8px; background: #343743; }
.first { margin: 8px 3px 0 12px; }
.second { margin: 8px 13px 0 7px; }
.big { width: 92px; height: 92px; }
.preview { width: 88px; height: 88px; margin: 4px 0 0 -2px; }
.rdp { width: 76px; height: 88px; }
.trash { width: 76px; height: 98px; margin-left: 8px; }
.lamps { width: 2880px; height: 8px; margin-top: -12px; display: grid; grid-template-columns: 224px 1794px 162px 8px; padding-left: 152px; }
.lamps i { width: 8px; height: 8px; border-radius: 4px; background: #0a0611; }
```
